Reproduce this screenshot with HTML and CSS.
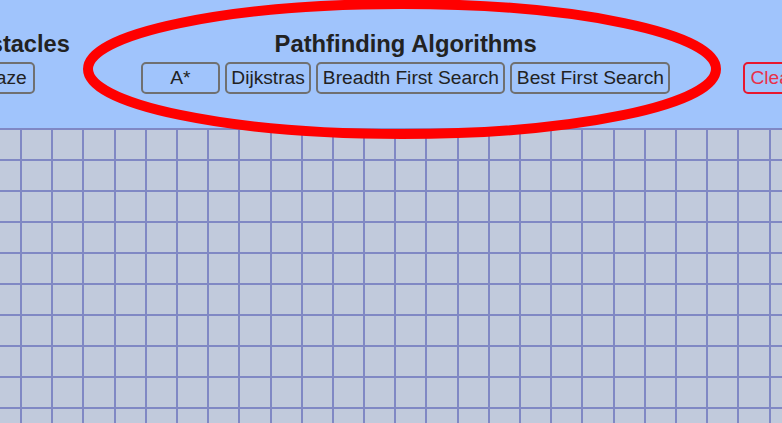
FILE: index.html
```html
<!DOCTYPE html>
<html lang="en">
<head>
<meta charset="utf-8">
<title>Pathfinding Visualizer</title>
<link rel="stylesheet" href="styles.css">
</head>
<body>
<header class="toolbar">
  <section class="group group-obstacles">
    <h3 class="group-title">Obstacles</h3>
    <div class="btn-row row-obstacles">
      <button class="btn">Maze</button>
    </div>
  </section>
  <section class="group group-algos">
    <h3 class="group-title title-algos">Pathfinding Algorithms</h3>
    <div class="btn-row">
      <button class="btn btn-astar">A*</button>
      <button class="btn">Dijkstras</button>
      <button class="btn">Breadth First Search</button>
      <button class="btn">Best First Search</button>
    </div>
  </section>
  <section class="group group-clear">
    <div class="btn-row">
      <button class="btn btn-clear">Clear Board</button>
    </div>
  </section>
</header>
<main class="board-wrap">
  <div class="board" id="board"></div>
</main>
<svg class="annotation" width="782" height="423" viewBox="0 0 782 423">
  <ellipse cx="402" cy="69" rx="314" ry="65" fill="none" stroke="#ff0000" stroke-width="10"/>
</svg>
<script src="script.js"></script>
</body>
</html>
```
FILE: styles.css
```css
* { box-sizing: border-box; }
html, body {
  margin: 0;
  padding: 0;
  overflow: hidden;
}
body {
  font-family: "Liberation Sans", Arial, sans-serif;
  color: #222;
  background: #c1cadc;
  width: 782px;
  height: 423px;
  position: relative;
}
.toolbar {
  height: 128px;
  background: #a0c4fc;
  display: flex;
  align-items: flex-end;
  gap: 71px;
  padding-bottom: 34px;
  overflow: hidden;
}
.group {
  display: flex;
  flex-direction: column;
  align-items: center;
  flex-shrink: 0;
}
.group-obstacles {
  align-items: flex-end;
  margin-left: -43px;
}
.row-obstacles {
  margin-right: 35px;
}
.group-clear {
  margin-left: 2px;
}
.group-title {
  margin: 0 0 4px;
  font-size: 23.6px;
  line-height: 28px;
  font-weight: bold;
  color: #222;
  white-space: nowrap;
}
.title-algos {
  font-size: 23.8px;
}
.btn-row {
  display: flex;
  gap: 5px;
}
.btn {
  height: 32px;
  padding: 0 4.5px;
  border: 2px solid #707070;
  border-radius: 5px;
  background: transparent;
  font-family: "Liberation Sans", Arial, sans-serif;
  font-size: 19.2px;
  line-height: 22px;
  color: #222;
  white-space: nowrap;
}
.group-obstacles .btn {
  padding: 0 6px;
}
.btn-astar {
  width: 79px;
}
.btn-clear {
  border-color: #e8182e;
  color: #e8304a;
  padding: 0 5px;
}
.board-wrap {
  overflow: hidden;
  height: 295px;
}
.board {
  display: grid;
  grid-template-columns: repeat(26, 29.2px);
  grid-auto-rows: 29px;
  gap: 2px;
  padding-top: 2px;
  margin-left: -9.2px;
  width: max-content;
  background: #8088c4;
}
.cell {
  background: #c1cadc;
}
.annotation {
  position: absolute;
  left: 0;
  top: 0;
  pointer-events: none;
}
```
FILE: script.js
```js
(function () {
  var board = document.getElementById('board');
  var rows = 10, cols = 26;
  for (var r = 0; r < rows; r++) {
    for (var c = 0; c < cols; c++) {
      var cell = document.createElement('div');
      cell.className = 'cell';
      board.appendChild(cell);
    }
  }
})();
```
